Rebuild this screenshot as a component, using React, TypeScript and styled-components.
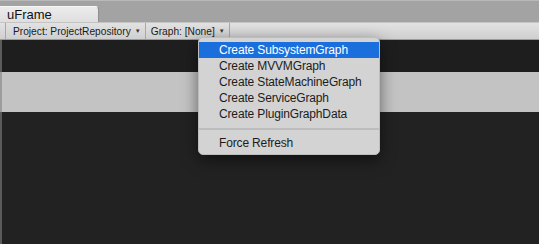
import styled, { createGlobalStyle } from 'styled-components';

const GlobalStyle = createGlobalStyle`
  html, body {
    margin: 0;
    padding: 0;
    background: #222222;
  }
  body {
    font-family: 'Liberation Sans', Arial, sans-serif;
  }
`;

const StyledWindow = styled.div`
  position: relative;
  display: flex;
  flex-direction: column;
  width: 539px;
  height: 244px;
  overflow: hidden;
  background: #222222;
`;

const StyledTitleBar = styled.div`
  display: flex;
  align-items: flex-end;
  height: 22px;
  background: #a3a3a3;
  border-top: 1px solid #b9b9b9;
  box-sizing: border-box;
`;

const StyledTab = styled.div`
  display: flex;
  align-items: center;
  box-sizing: border-box;
  width: 99px;
  height: 16px;
  padding-left: 7px;
  background: linear-gradient(#ececec, #dedede);
  border-top: 1px solid #f6f6f6;
  border-right: 1px solid #8f8f8f;
  border-top-right-radius: 4px;
  color: #111;
  font-size: 13px;
`;

const StyledToolbar = styled.div`
  display: flex;
  align-items: stretch;
  height: 18px;
  box-sizing: border-box;
  padding-left: 5px;
  background: linear-gradient(#e2e2e2, #cfcfcf);
  border-top: 1px solid #c4c4c4;
  border-bottom: 1px solid #9a9a9a;
`;

const StyledToolbarButton = styled.div<{ first?: boolean }>`
  display: flex;
  align-items: center;
  gap: 4px;
  padding: 0 4px 0 ${(p) => (p.first ? 7 : 5)}px;
  border-left: ${(p) => (p.first ? '1px solid #a8a8a8' : 'none')};
  border-right: 1px solid #a8a8a8;
  color: #1a1a1a;
  font-size: 10.2px;
`;

const StyledArrow = styled.span`
  font-size: 6px;
  color: #333;
`;

const StyledDarkStrip = styled.div`
  height: 32px;
  background: #1e1e1e;
  border-left: 2px solid #5b5b5b;
`;

const StyledBand = styled.div`
  height: 40px;
  background: #c3c3c3;
  border-left: 2px solid #9c9c9c;
`;

const StyledCanvas = styled.div`
  flex: 1;
  background: #222222;
  border-left: 2px solid #5b5b5b;
`;

const StyledMenu = styled.div`
  position: absolute;
  left: 198px;
  top: 37px;
  width: 182px;
  box-sizing: border-box;
  padding: 4px 0 3px;
  background: #d3d3d3;
  border: 1px solid #bdbdbd;
  border-radius: 5px;
  box-shadow: 0 5px 16px rgba(0, 0, 0, 0.5);
`;

const StyledMenuItem = styled.div<{ active?: boolean }>`
  display: flex;
  align-items: center;
  height: 16px;
  padding-left: 20px;
  background: ${(p) => (p.active ? '#1b6fdc' : 'transparent')};
  color: ${(p) => (p.active ? '#ffffff' : '#1c1c1c')};
  font-family: 'Liberation Sans', Arial, sans-serif;
  font-size: 12px;
  letter-spacing: -0.15px;
`;

const StyledSeparator = styled.div`
  height: 2px;
  margin: 6px 0 5px;
  background: #bdbdbd;
`;

const createItems = [
  'Create SubsystemGraph',
  'Create MVVMGraph',
  'Create StateMachineGraph',
  'Create ServiceGraph',
  'Create PluginGraphData',
];

export default function App() {
  return (
    <StyledWindow>
      <GlobalStyle />
      <StyledTitleBar>
        <StyledTab>uFrame</StyledTab>
      </StyledTitleBar>
      <StyledToolbar>
        <StyledToolbarButton first>
          Project: ProjectRepository <StyledArrow>▼</StyledArrow>
        </StyledToolbarButton>
        <StyledToolbarButton>
          Graph: [None] <StyledArrow>▼</StyledArrow>
        </StyledToolbarButton>
      </StyledToolbar>
      <StyledDarkStrip />
      <StyledBand />
      <StyledCanvas />
      <StyledMenu>
        {createItems.map((label, i) => (
          <StyledMenuItem key={label} active={i === 0}>
            {label}
          </StyledMenuItem>
        ))}
        <StyledSeparator />
        <StyledMenuItem>Force Refresh</StyledMenuItem>
      </StyledMenu>
    </StyledWindow>
  );
}
